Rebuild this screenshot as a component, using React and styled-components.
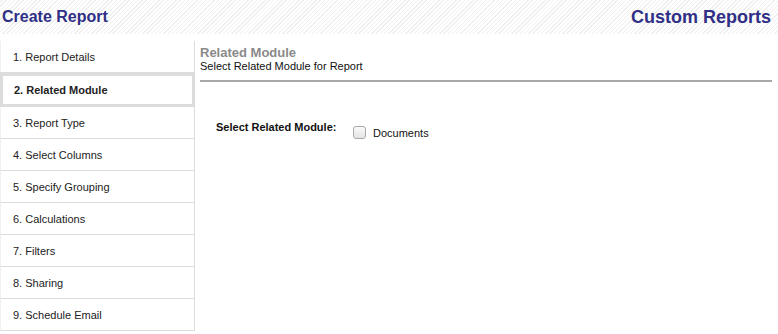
import React from 'react';
import styled, { createGlobalStyle } from 'styled-components';

const GlobalStyle = createGlobalStyle`
  body {
    margin: 0;
    background: #fff;
    font-family: Arial, "Liberation Sans", sans-serif;
  }
`;

const Header = styled.div`
  height: 34px;
  display: flex;
  align-items: center;
  justify-content: space-between;
  padding: 0 7px 0 2px;
  background: repeating-linear-gradient(-45deg, #fff 0 2px, #efefef 2px 3px);
`;

const Title = styled.h1`
  margin: 0;
  font-size: ${(p) => (p.big ? '18px' : '16px')};
  font-weight: bold;
  color: #2f2f86;
`;

const Body = styled.div`
  display: flex;
  margin-top: 7px;
`;

const Sidebar = styled.ul`
  list-style: none;
  margin: 0;
  padding: 0;
  width: 195px;
  flex-shrink: 0;
`;

const Step = styled.li`
  height: 31px;
  display: flex;
  align-items: center;
  padding-left: 12px;
  font-size: 11px;
  color: #222;
  border-right: 1px solid #dcdcdc;
  border-bottom: 1px solid #dcdcdc;
  border-left: 1px solid #f0f0f0;
  box-sizing: content-box;
`;

const ActiveStep = styled(Step)`
  height: 28px;
  margin-top: -1px;
  padding-left: 11px;
  font-weight: bold;
  border: 3px solid #dcdcdc;
  border-top-width: 4px;
`;

const Main = styled.div`
  flex: 1;
  padding: 4px 6px 0 5px;
`;

const SectionTitle = styled.h2`
  margin: 0;
  font-size: 13px;
  font-weight: bold;
  color: #8a8a8a;
  line-height: 15px;
`;

const SectionSub = styled.div`
  font-size: 11px;
  color: #111;
  line-height: 13px;
  padding-bottom: 7px;
  border-bottom: 2px solid #a8a8a8;
`;

const FieldRow = styled.div`
  display: flex;
  align-items: flex-start;
  margin: 39px 0 0 16px;
  font-size: 11px;
  color: #111;
`;

const FieldLabel = styled.span`
  font-weight: bold;
  width: 137px;
`;

const Option = styled.label`
  display: flex;
  align-items: center;
  gap: 7px;
  margin-top: 5px;
`;

const Box = styled.span`
  width: 11px;
  height: 11px;
  border: 1px solid #a9a9a9;
  border-radius: 3px;
  background: linear-gradient(#fafafa, #e4e4e4);
`;

const steps = [
  '1. Report Details',
  '2. Related Module',
  '3. Report Type',
  '4. Select Columns',
  '5. Specify Grouping',
  '6. Calculations',
  '7. Filters',
  '8. Sharing',
  '9. Schedule Email',
];

export default function App() {
  const active = 1;
  return (
    <>
      <GlobalStyle />
      <Header>
        <Title>Create Report</Title>
        <Title big>Custom Reports</Title>
      </Header>
      <Body>
        <Sidebar>
          {steps.map((s, i) =>
            i === active ? <ActiveStep key={s}>{s}</ActiveStep> : <Step key={s}>{s}</Step>
          )}
        </Sidebar>
        <Main>
          <SectionTitle>Related Module</SectionTitle>
          <SectionSub>Select Related Module for Report</SectionSub>
          <FieldRow>
            <FieldLabel>Select Related Module:</FieldLabel>
            <Option>
              <Box />
              Documents
            </Option>
          </FieldRow>
        </Main>
      </Body>
    </>
  );
}
